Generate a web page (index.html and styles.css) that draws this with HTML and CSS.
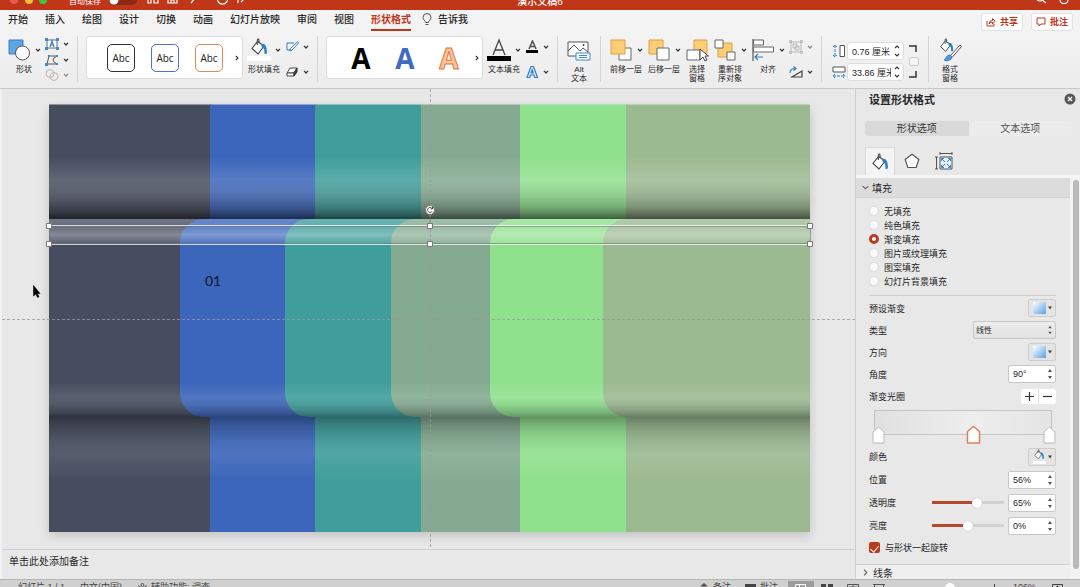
FILE: index.html
```html
<!DOCTYPE html>
<html lang="zh-CN">
<head>
<meta charset="utf-8">
<title>演示文稿6</title>
<link rel="stylesheet" href="styles.css">
</head>
<body>
<svg class="defs" aria-hidden="true">
  <symbol id="chev" viewBox="0 0 6 4"><path d="M1 .8 3 3 5 .8" fill="none" stroke="#333" stroke-width="1.2"/></symbol>
  <symbol id="next" viewBox="0 0 4 6"><path d="M.8 1 3 3 .8 5" fill="none" stroke="#333" stroke-width="1.1"/></symbol>
  <symbol id="steps" viewBox="0 0 6 14"><path d="M3 2 5 5H1zM3 12 5 9H1z" fill="#555"/></symbol>
  <symbol id="updown" viewBox="0 0 6 14"><path d="M1 4 3 2 5 4M1 10 3 12 5 10" fill="none" stroke="#333" stroke-width="1.1"/></symbol>
  <symbol id="bucket" viewBox="0 0 18 18"><path d="M7 4 2 10.5 8 16 14 8 7.5 3.500M7.300 7V2.200Q7.500.7 8.700 1L9.500 5.500" fill="#fff" stroke="#444" stroke-width="1.100"/><path d="M11 6Q17 4 17 15.500L14.500 16Q15 10 11.500 8.500z" fill="#2f7fc4"/></symbol>
</svg>
<div class="app">
  <header class="titlebar">
    <div class="title-left">
      <svg width="38" height="10" viewBox="0 0 38 10"><circle cx="4" cy="5" r="4" fill="#f0584f"/><circle cx="19" cy="5" r="4" fill="#f6bd3b"/><circle cx="33" cy="5" r="4" fill="#3ec544"/></svg>
      <span class="autosave">自动保存</span>
      <svg width="28" height="10" viewBox="0 0 28 10"><rect width="28" height="10" rx="5" fill="#8e2a13"/><circle cx="5" cy="5" r="4.500" fill="#fff"/></svg>
      <svg width="102" height="12" viewBox="0 0 102 12" fill="none" stroke="#fff" stroke-width="1.200"><path d="M1 3v6h3V5h3v4h4V3M21 1v8h9V1M24 9V6h3v3M44 9l5-6M71 3a5 5 0 1 0 9 0M91 9V2h8M94 8l6-6"/></svg>
    </div>
    <span class="doc-title">演示文稿6</span>
    <div class="title-right">
      <svg width="34" height="12" viewBox="0 0 34 12" fill="none" stroke="#fff" stroke-width="1.200"><circle cx="4" cy="3" r="4"/><path d="M6 6l4 3M24 3v3a4 3.500 0 0 0 8 0V3"/></svg>
    </div>
  </header>

  <nav class="tabs">
    <button>开始</button><button>插入</button><button>绘图</button><button>设计</button><button>切换</button><button>动画</button><button>幻灯片放映</button><button>审阅</button><button>视图</button><button class="current">形状格式</button>
    <button class="tell"><svg width="10" height="13" viewBox="0 0 10 13" fill="none" stroke="#555"><path d="M3.500 9.500C3.500 7.500 1 7 1 4.500a4 4 0 0 1 8 0C9 7 6.500 7.500 6.500 9.500zM3.500 11.500h3"/></svg>告诉我</button>
    <div class="share">
      <button><svg width="10" height="10" viewBox="0 0 10 10" fill="none" stroke="#c0391d"><path d="M1 4v5h7V7M3 7Q3 3.500 6.500 3.500V1.500L9.300 4.300 6.500 7V5Q4 5 3 7z"/></svg>共享</button>
      <button><svg width="10" height="10" viewBox="0 0 10 10" fill="none" stroke="#c0391d"><path d="M1 1h8v6H5L3 9V7H1z"/></svg>批注</button>
    </div>
  </nav>

  <section class="ribbon">
    <button class="tool"><span class="pic"><svg width="24" height="24" viewBox="0 0 24 24"><path d="M2 2h14v14H2z" fill="#5da5e4" stroke="#3b7fc0"/><circle cx="15.500" cy="15" r="7" fill="#fff" stroke="#555"/></svg><svg class="chev"><use href="#chev"/></svg></span><span>形状</span></button>
    <div class="minis three">
      <button aria-label="文本框"><svg width="14" height="12" viewBox="0 0 14 12"><path d="M2 2h10v8H2z" fill="#fff" stroke="#6b6b6b"/><path d="M5 9 7 3 9 9M5.700 7h2.600" stroke="#2f7fc4" fill="none" stroke-width="1.200"/><path d="M0 0h3v3H0zM11 0h3v3h-3zM0 9h3v3H0zM11 9h3v3h-3z" fill="#3b8bd0"/></svg><svg class="chev"><use href="#chev"/></svg></button>
      <button aria-label="编辑形状"><svg width="14" height="12" viewBox="0 0 14 12"><path d="M4 2h8Q8 4 8 6t4 4H2z" fill="none" stroke="#555"/><path d="M3 1h2v2H3zM11 1h2v2h-2zM0 9h3v3H0zM11 9h2v2h-2z" fill="#3b8bd0"/></svg><svg class="chev"><use href="#chev"/></svg></button>
      <button aria-label="合并形状" disabled><svg width="14" height="12" viewBox="0 0 14 12" fill="none" stroke="#888"><circle cx="5" cy="4.500" r="4"/><circle cx="9" cy="7.500" r="4"/></svg><svg class="chev"><use href="#chev"/></svg></button>
    </div>
    <span class="sep"></span>
    <div class="gallery">
      <button class="abc dark">Abc</button><button class="abc blue">Abc</button><button class="abc orange">Abc</button>
      <button class="more" aria-label="更多形状样式"><svg width="4" height="6"><use href="#next"/></svg></button>
    </div>
    <button class="tool"><span class="pic"><svg width="24" height="24" viewBox="0 0 24 24"><use href="#bucket" x="3" y="0" width="18" height="18"/><path d="M0 18h24v5H0z" fill="#fff"/></svg><svg class="chev"><use href="#chev"/></svg></span><span>形状填充</span></button>
    <div class="minis">
      <button aria-label="形状轮廓"><svg width="14" height="12" viewBox="0 0 14 12"><path d="M9 2H2v7h5" fill="none" stroke="#2f7fc4"/><path d="M12.500.8 13.500 2 7 9 5 10 5.500 7.500z" fill="#fff" stroke="#2f7fc4"/></svg><svg class="chev"><use href="#chev"/></svg></button>
      <button aria-label="形状效果"><svg width="14" height="12" viewBox="0 0 14 12"><path d="M5 2h7L9 7H2z" fill="#fff" stroke="#444"/><path d="M2 7h7v3H2z" fill="#fff" stroke="#444"/><path d="M9 7l3-5v4L9 10z" fill="#444" stroke="#333"/></svg><svg class="chev"><use href="#chev"/></svg></button>
    </div>
    <span class="sep"></span>
    <div class="gallery">
      <button class="wa black">A</button><button class="wa azure">A</button><button class="wa peach">A</button>
      <button class="more" aria-label="更多艺术字样式"><svg width="4" height="6"><use href="#next"/></svg></button>
    </div>
    <button class="tool"><span class="pic"><svg width="24" height="24" viewBox="0 0 24 24"><path d="M6 17 12 2 18 17M8 12h8" fill="none" stroke="#444" stroke-width="1.300"/><path d="M0 18h24v5H0z"/></svg><svg class="chev"><use href="#chev"/></svg></span><span>文本填充</span></button>
    <div class="minis">
      <button aria-label="文本轮廓"><svg width="14" height="14" viewBox="0 0 14 14"><path d="M4 9 7.500 1 11 9M5.500 6.500h4" fill="none" stroke="#555" stroke-width="1.600"/><path d="M1 10h12v3H1z"/></svg><svg class="chev"><use href="#chev"/></svg></button>
      <button aria-label="文本效果"><svg width="14" height="14" viewBox="0 0 14 14"><path d="M2 12.500 6 1.500h2.500l4 11H9.700L9 10H5.500l-.7 2.500zM6.200 8h2L7.200 5z" fill="#d8ecfb" stroke="#2f7fc4" stroke-width="1.200"/></svg><svg class="chev"><use href="#chev"/></svg></button>
    </div>
    <span class="sep"></span>
    <button class="tool alt"><span class="pic"><svg width="24" height="24" viewBox="0 0 24 24"><path d="M1 4h20v14H1z" fill="#fff" stroke="#555"/><path d="M1 13 7 7l6 6 3-3 5 4" fill="none" stroke="#555"/><circle cx="16.500" cy="7" r="1" fill="#444"/><path d="M9 15h14v7H9z" fill="#fff" stroke="#3b8bd0"/><path d="M12 17.500h8M12 19.500h8" stroke="#3b8bd0"/></svg></span><span>Alt<br>文本</span></button>
    <span class="sep"></span>
    <button class="tool"><span class="pic"><svg width="24" height="24" viewBox="0 0 24 24"><path d="M10 10h12v12H10z" fill="#fff" stroke="#666"/><path d="M2 2h14v14H2z" fill="#fbcd77" stroke="#e0a03c"/></svg><svg class="chev"><use href="#chev"/></svg></span><span>前移一层</span></button>
    <button class="tool"><span class="pic"><svg width="24" height="24" viewBox="0 0 24 24"><path d="M2 2h14v14H2z" fill="#fbcd77" stroke="#e0a03c"/><path d="M10 10h12v12H10z" fill="#fff" stroke="#666"/></svg><svg class="chev"><use href="#chev"/></svg></span><span>后移一层</span></button>
    <button class="tool slim"><span class="pic"><svg width="24" height="24" viewBox="0 0 24 24"><path d="M9 2h13v13H9z" fill="#fbcd77" stroke="#e0a03c"/><path d="M2 12h13v10H2z" fill="#fff" stroke="#666"/><path d="M15 11v11l3-3 2 4 2-1-2-4h3.500z" fill="#fff" stroke="#444"/></svg></span><span>选择<br>窗格</span></button>
    <button class="tool"><span class="pic"><svg width="24" height="24" viewBox="0 0 24 24"><path d="M5 5h14v14H5z" fill="#fbcd77" stroke="#e0a03c"/><path d="M2 2h8v8H2zM14 14h8v8h-8z" fill="#fff" stroke="#666"/></svg><svg class="chev"><use href="#chev"/></svg></span><span>重新排<br>序对象</span></button>
    <button class="tool"><span class="pic"><svg width="24" height="24" viewBox="0 0 24 24"><path d="M2 1v22" stroke="#555" stroke-width="1.200"/><path d="M2.500 2h10v5h-10zM2.500 9h20v5h-20z" fill="#fff" stroke="#666"/><path d="M12 19H4M7 16l-3 3 3 3" fill="none" stroke="#2f7fc4" stroke-width="1.200"/></svg><svg class="chev"><use href="#chev"/></svg></span><span>对齐</span></button>
    <div class="minis">
      <button aria-label="组合" disabled><svg width="14" height="14" viewBox="0 0 14 14" fill="none" stroke="#888"><path d="M2 2h10v10H2zM4 4h4v4H4zM6 6h4v4H6z"/><path d="M.5.500h2v2h-2zM11.500.500h2v2h-2zM.5 11.500h2v2h-2zM11.500 11.500h2v2h-2z"/></svg><svg class="chev"><use href="#chev"/></svg></button>
      <button aria-label="旋转"><svg width="14" height="12" viewBox="0 0 14 12" fill="none"><path d="M3 11h10V5z" stroke="#444" stroke-width="1.200"/><path d="M1 7Q1 2.500 6 2.500M4.500.5 7 2.500l-2.500 2" stroke="#2f7fc4" stroke-width="1.200"/></svg><svg class="chev"><use href="#chev"/></svg></button>
    </div>
    <span class="sep"></span>
    <div class="size">
      <div class="fields">
        <label><svg width="14" height="14" viewBox="0 0 14 14" fill="none"><path d="M8 1.500h4.500v11H8z" stroke="#555" fill="#fff"/><path d="M3 1v12M1 3l2-2 2 2M1 11l2 2 2-2" stroke="#2f7fc4" stroke-dasharray="3 1"/></svg><span class="box"><input aria-label="高度" value="0.76 厘米"><svg width="6" height="14"><use href="#updown"/></svg></span></label>
        <label><svg width="14" height="14" viewBox="0 0 14 14" fill="none"><path d="M1 2h12v5H1z" stroke="#555" fill="#fff"/><path d="M1 11h12M3 9l-2 2 2 2M11 9l2 2-2 2" stroke="#2f7fc4" stroke-dasharray="3 1"/></svg><span class="box"><input aria-label="宽度" value="33.86 厘米"><svg width="6" height="14"><use href="#updown"/></svg></span></label>
      </div>
      <div class="lock"><svg width="8" height="7" viewBox="0 0 8 7"><path d="M0 1h7v6" fill="none" stroke="#333" stroke-width="1.500"/></svg><input type="checkbox" aria-label="锁定纵横比"><svg width="8" height="7" viewBox="0 0 8 7"><path d="M0 6h7V0" fill="none" stroke="#333" stroke-width="1.500"/></svg></div>
    </div>
    <span class="sep"></span>
    <button class="tool alt"><span class="pic"><svg width="24" height="24" viewBox="0 0 24 24"><use href="#bucket" x="1" y="0" width="15" height="15"/><path d="M22 7 12 18l2 1.500L23.500 8.500z" fill="#fff" stroke="#555"/><path d="M12 17q3 1 1 4-3 3-7 1 2-1 2.500-3 1-2 3.500-2z" fill="#4d9be0" stroke="#2f7fc4"/></svg></span><span>格式<br>窗格</span></button>
  </section>

  <main class="work">
    <div class="stage">
      <svg class="canvas" viewBox="2 89 853 460" role="img" aria-label="幻灯片">
        <defs>
          <linearGradient id="fold" x2="0" y2="1"><stop offset="0" stop-color="#fff" stop-opacity="0"/><stop offset=".35" stop-color="#fff" stop-opacity=".14"/><stop offset=".6" stop-color="#999" stop-opacity=".24"/><stop offset=".8" stop-color="#383838" stop-opacity=".3"/><stop offset="1" stop-color="#000" stop-opacity=".58"/></linearGradient>
          <linearGradient id="edge" x2="0" y2="1"><stop offset="0" stop-color="#fff" stop-opacity=".22"/><stop offset=".3" stop-color="#fff" stop-opacity=".18"/><stop offset=".64" stop-color="#fff" stop-opacity=".34"/><stop offset="1" stop-color="#fff" stop-opacity=".08"/></linearGradient>
          <linearGradient id="dip" x2="0" y2="1"><stop offset="0" stop-color="#fff" stop-opacity=".02"/><stop offset=".4" stop-color="#fff" stop-opacity=".1"/><stop offset=".7" stop-color="#666" stop-opacity=".18"/><stop offset="1" stop-color="#000" stop-opacity=".33"/></linearGradient>
          <linearGradient id="rise" x2="0" y2="1"><stop offset="0" stop-color="#000" stop-opacity=".33"/><stop offset=".25" stop-color="#444" stop-opacity=".16"/><stop offset=".6" stop-color="#fff" stop-opacity=".09"/><stop offset="1" stop-color="#fff" stop-opacity="0"/></linearGradient>
          <filter id="soft" x="-10%" y="-10%" width="120%" height="120%"><feGaussianBlur stdDeviation="6"/></filter>
        </defs>
        <rect x="49" y="110" width="761" height="426" fill="#000" opacity=".16" filter="url(#soft)"/>
        <path fill="#474d5f" d="M49 104.500h162v427.500H49z"/>
        <path fill="#3c66bb" d="M210 104.500h106v427.500H210z"/>
        <path fill="#3f9e9b" d="M315 104.500h106v427.500H315z"/>
        <path fill="#84ab91" d="M421 104.500h99v427.500h-99z"/>
        <path fill="#90e18e" d="M520 104.500h107v427.500H520z"/>
        <path fill="#9cba92" d="M626 104.500h184v427.500H626z"/>
        <rect x="49" y="157" width="761" height="62" fill="url(#fold)"/>
        <rect x="49" y="417" width="761" height="63" fill="url(#rise)"/>
        <path fill="#474d5f" d="M49 219h200v198H49z"/>
        <path fill="#3c66bb" d="M340 219H204a24 24 0 0 0-24 24v150a24 24 0 0 0 24 24h136z"/>
        <path fill="#3f9e9b" d="M440 219H309a24 24 0 0 0-24 24v150a24 24 0 0 0 24 24h131z"/>
        <path fill="#84ab91" d="M540 219H415a24 24 0 0 0-24 24v150a24 24 0 0 0 24 24h125z"/>
        <path fill="#90e18e" d="M650 219H514a24 24 0 0 0-24 24v150a24 24 0 0 0 24 24h136z"/>
        <path fill="#9cba92" d="M810 219H627a24 24 0 0 0-24 24v150a24 24 0 0 0 24 24h183z"/>
        <rect x="49" y="219" width="761" height="25" fill="url(#edge)"/>
        <rect x="49" y="384" width="761" height="33" fill="url(#dip)"/>
        <text x="205" y="286" class="number">01</text>
        <path d="M2 319.500h853M430.500 89v460" stroke="#999" stroke-dasharray="3 2" opacity=".75"/>
        <path d="M49 225.500h761M49 244.500h761" stroke="#fff" opacity=".75"/>
        <path d="M49 226.500h761M49 243.500h761M49.500 226v18M810.500 226v18M430 214v12" stroke="#777" opacity=".6"/>
        <g fill="#fff" stroke="#777"><path d="M46.500 223.500h5v5h-5zM427.500 223.500h5v5h-5zM807.500 223.500h5v5h-5zM46.500 241.500h5v5h-5zM427.500 241.500h5v5h-5zM807.500 241.500h5v5h-5z"/><circle cx="430" cy="210" r="4.500"/></g>
        <path d="M432 208.500a2.500 2.500 0 1 0 .3 2.500M432.500 207v2h-2" fill="none" stroke="#555"/>
        <path d="M33.500 285.500v10.500l2.300-2 1.700 3.500 1.500-.8-1.700-3.200h2.700z" stroke="#000" stroke-width=".6"/>
      </svg>
      <div class="notes">单击此处添加备注</div>
    </div>

    <aside class="pane">
      <div class="pane-head"><h2>设置形状格式</h2><button aria-label="关闭"><svg width="12" height="12" viewBox="0 0 12 12"><circle cx="6" cy="6" r="5.500" fill="#585858"/><path d="M4 4l4 4M8 4l-4 4" stroke="#fff" stroke-width="1.400"/></svg></button></div>
      <div class="segments"><button class="on">形状选项</button><button>文本选项</button></div>
      <div class="kinds">
        <button class="on" aria-label="填充与线条"><svg width="18" height="18"><use href="#bucket"/></svg></button>
        <button aria-label="效果"><svg width="16" height="16" viewBox="0 0 16 16"><path d="M8 1.200 14.800 6.500 12.200 14.500H3.800L1.200 6.500z" fill="#fff" stroke="#555" stroke-width="1.200"/></svg></button>
        <button aria-label="大小与属性"><svg width="18" height="18" viewBox="0 0 18 18" fill="none" stroke="#555"><path d="M5 5h12v12H5z" fill="#e4f1fb"/><path d="M5 1.500h12M5 0v3M17 0v3M1.500 5v12M0 5h3M0 17h3"/><path d="M7 7l3 3M15 7l-3 3M7 15l3-3M15 15l-3-3M6.500 9V6.500H9M13 6.500h2.500V9M15.500 13v2.500H13M9 15.500H6.500V13" stroke="#2f86cf"/></svg></button>
      </div>
      <div class="scroller">
        <div class="content">
          <button class="section"><svg width="7" height="5" viewBox="0 0 6 4"><path d="M.5.8 3 3 5.500.8" fill="none" stroke="#666"/></svg>填充</button>
          <form class="form">
            <div class="radios">
              <label><input type="radio" name="fill">无填充</label>
              <label><input type="radio" name="fill">纯色填充</label>
              <label><input type="radio" name="fill" checked>渐变填充</label>
              <label><input type="radio" name="fill">图片或纹理填充</label>
              <label><input type="radio" name="fill">图案填充</label>
              <label><input type="radio" name="fill">幻灯片背景填充</label>
            </div>
            <div class="presets">
              <div class="row"><span>预设渐变</span><button type="button" class="swatch" aria-label="预设渐变"><i></i><svg width="4" height="4" viewBox="0 0 4 4"><path d="M0 .5h4L2 3.500z" fill="#444"/></svg></button></div>
              <div class="row"><label for="kind">类型</label><span class="pick"><select id="kind"><option>线性</option></select><svg width="6" height="12"><use href="#steps"/></svg></span></div>
              <div class="row"><span>方向</span><button type="button" class="swatch" aria-label="方向"><i></i><svg width="4" height="4" viewBox="0 0 4 4"><path d="M0 .5h4L2 3.500z" fill="#444"/></svg></button></div>
              <div class="row"><label for="angle">角度</label><span class="spin"><input id="angle" value="90°"><svg width="6" height="14"><use href="#steps"/></svg></span></div>
              <div class="row"><span>渐变光圈</span><span class="pm"><button type="button" aria-label="添加"><svg width="9" height="9" viewBox="0 0 9 9"><path d="M0 4.500h9M4.500 0v9" stroke="#333" stroke-width="1.200"/></svg></button><button type="button" aria-label="删除"><svg width="9" height="9" viewBox="0 0 9 9"><path d="M0 4.500h9" stroke="#333" stroke-width="1.200"/></svg></button></span></div>
            </div>
            <svg class="ramp" viewBox="0 0 187 35" aria-hidden="true"><defs><linearGradient id="g"><stop offset="0" stop-color="#e0e0e0"/><stop offset=".55" stop-color="#eee"/><stop offset="1" stop-color="#e4e4e4"/></linearGradient></defs><path d="M5.500.5h177v24H5.500z" fill="url(#g)" stroke="#c4c4c4"/><path d="M4 33V22l5.500-5 5.500 5v11zM175 33V22l5.500-5 5.500 5v11z" fill="#fff" stroke="#bbb"/><path d="M98.500 33V21.500l6-5 6 5V33z" fill="#fff" stroke="#db8156" stroke-width="1.500"/></svg>
            <div class="row"><span>颜色</span><button type="button" class="swatch" aria-label="颜色"><svg width="13" height="15" viewBox="0 0 13 15"><use href="#bucket" width="12" height="11"/><path d="M0 12h13v3H0z" fill="#fff"/></svg><svg width="4" height="4" viewBox="0 0 4 4"><path d="M0 .5h4L2 3.500z" fill="#444"/></svg></button></div>
            <div class="row"><label for="pos">位置</label><span class="spin"><input id="pos" value="56%"><svg width="6" height="14"><use href="#steps"/></svg></span></div>
            <div class="row"><label for="alpha">透明度</label><input class="range alpha" type="range" value="65" aria-label="透明度"><span class="spin"><input id="alpha" value="65%"><svg width="6" height="14"><use href="#steps"/></svg></span></div>
            <div class="row"><label for="bright">亮度</label><input class="range" type="range" min="-100" max="100" value="0" aria-label="亮度"><span class="spin"><input id="bright" value="0%"><svg width="6" height="14"><use href="#steps"/></svg></span></div>
            <label class="turn"><input type="checkbox" checked>与形状一起旋转</label>
          </form>
          <button class="section line"><svg width="5" height="7" viewBox="0 0 4 6"><path d="M.8.5 3 3 .8 5.500" fill="none" stroke="#666"/></svg>线条</button>
        </div>
        <div class="bar"><i></i></div>
      </div>
    </aside>
  </main>

  <footer class="status">
    <span>幻灯片 1 / 1</span><span>中文(中国)</span>
    <span class="with"><svg width="11" height="10" viewBox="0 0 11 10" fill="none" stroke="#555"><circle cx="5.500" cy="2" r="1.500"/><path d="M1 2.500l3 2v5M10 2.500l-3 2v5"/></svg>辅助功能: 调查</span>
    <div class="views">
      <button><svg width="12" height="9" viewBox="0 0 12 9"><path d="M6 0l4 3.500H2zM0 5h12v1H0z" fill="#555"/></svg>备注</button>
      <button><svg width="12" height="9" viewBox="0 0 12 9"><path d="M0 1h11v7H0z" fill="#444"/></svg>批注</button>
      <button class="view on" aria-label="普通视图"><svg width="12" height="9" viewBox="0 0 12 9" fill="none" stroke="#fff"><path d="M.5 1.500h10V9M.5 1.500V9M4.500 2v7M6 5h4"/></svg></button>
      <button class="view" aria-label="幻灯片浏览"><svg width="12" height="9" viewBox="0 0 12 9" fill="#444"><path d="M0 1h5v3H0zM7 1h5v3H7zM0 6h5v3H0zM7 6h5v3H7z"/></svg></button>
      <button class="view" aria-label="阅读视图"><svg width="12" height="9" viewBox="0 0 12 9" fill="none" stroke="#555"><path d="M.5 1.500h11V9M.5 1.500V9M6 2v7M2 4h3M7 4h3"/></svg></button>
      <button class="view" aria-label="幻灯片放映"><svg width="12" height="9" viewBox="0 0 12 9" fill="none" stroke="#555"><path d="M0 1.500h12M1.500 2v5h9V2"/></svg></button>
      <svg width="100" height="10" viewBox="0 0 100 10"><path d="M1 4.500h7M92 4.500h7M95.500 1v8" stroke="#444"/><path d="M12 4.500h76" stroke="#999"/><circle cx="51" cy="5" r="5" fill="#fff"/></svg>
      <span class="zoom">106%</span>
      <svg width="11" height="9" viewBox="0 0 11 9" fill="none" stroke="#444"><path d="M.5 1.500h10V9M.5 1.500V9M5.500 3v6M3.500 4.500l2-1.500 2 1.500"/></svg>
    </div>
  </footer>
</div>
</body>
</html>
```

FILE: styles.css
```css
* { box-sizing: border-box; }
body {
  margin: 0;
  overflow: hidden;
  color: #262626;
  font-family: "Liberation Sans", "Noto Sans CJK SC", sans-serif;
  font-size: 9px;
}
button, input, select { font: inherit; color: inherit; }
button { border: 0; padding: 0; background: none; white-space: nowrap; }
svg { display: block; flex: none; }
.defs { width: 0; height: 0; position: absolute; }
.chev { width: 6px; height: 4px; }
.app { display: flex; flex-direction: column; height: 100vh; }

/* Title bar */
.titlebar {
  height: 10px;
  flex: none;
  overflow: hidden;
  display: grid;
  grid-template: 10px / 1fr auto 1fr;
  align-items: end;
  background: #bf3619;
  color: #fff;
}
.title-left, .title-right, .doc-title { display: flex; align-items: center; height: 20px; }
.title-left { padding-left: 10px; }
.title-right { justify-content: flex-end; padding-right: 10px; }
.autosave { font-size: 8px; margin: 0 8px 0 21px; }
.title-left svg:last-child { margin-left: 10px; }
.doc-title { font-size: 10px; font-weight: 500; }

/* Tabs */
.tabs {
  display: flex;
  flex: none;
  height: 24px;
  padding: 0 7px 0 8px;
  gap: 17px;
  background: #f3f3f3;
  font-size: 10px;
  font-weight: 500;
}
.tabs button { border-bottom: 2px solid transparent; height: 21px; line-height: 19px; }
.tabs .current { color: #bf3619; border-color: #bf3619; font-weight: 700; }
.tabs .tell { display: flex; align-items: center; gap: 6px; margin-left: -6px; }
.share { display: flex; gap: 8px; margin-left: auto; padding-top: 3px; }
.tabs .share button {
  display: flex;
  align-items: center;
  justify-content: center;
  gap: 4px;
  width: 42px;
  height: 18px;
  border: 1px solid #e2e2e2;
  border-radius: 3px;
  background: #fff;
  color: #bf3619;
  font-size: 9px;
  font-weight: 700;
}

/* Ribbon */
.ribbon {
  display: flex;
  flex: none;
  height: 55px;
  padding: 2px 7px 0;
  gap: 4px;
  background: linear-gradient(#f3f3f3, #ececec);
  border-bottom: 1px solid #c9c9c9;
}
.sep { width: 1px; height: 46px; margin: 0 4px; background: #d4d4d4; flex: none; }
.tool {
  display: flex;
  flex-direction: column;
  align-items: center;
  gap: 3px;
  width: 34px;
  padding-top: 2px;
  flex: none;
  font-size: 8px;
  line-height: 9px;
}
.tool > span { display: block; }
.tool .pic { display: flex; align-items: center; gap: 4px; width: 34px; height: 24px; }
.tool.alt { width: 26px; }
.tool.slim { width: 24px; }
.tool.alt .pic, .tool.slim .pic { width: 24px; }
.minis {
  display: flex;
  flex-direction: column;
  justify-content: space-between;
  width: 24px;
  height: 46px;
  padding: 4px 0 3px;
  flex: none;
}
.minis.three { padding: 1px 0 0; }
.minis button { display: flex; align-items: center; justify-content: space-between; height: 14px; }
.minis button:disabled { opacity: .55; }
.gallery {
  display: flex;
  align-items: center;
  width: 157px;
  height: 43px;
  padding-left: 20px;
  gap: 16px;
  flex: none;
  background: #fff;
  border: 1px solid #dcdcdc;
  border-radius: 3px;
}
.gallery .more { margin-left: -4px; }
.abc {
  width: 28px;
  height: 28px;
  border: 1px solid #333;
  border-radius: 5px;
  color: #222;
  font: 10px "Open Sans", sans-serif;
}
.abc.blue { border-color: #4b74c4; }
.abc.orange { border-color: #dd8a52; }
.wa { width: 28px; font: 700 28px/40px "Open Sans", sans-serif; color: #000; }
.wa.azure { color: #3f6cbf; }
.wa.peach { color: #f9c59c; -webkit-text-stroke: 1px #e8743b; }
.size { display: flex; gap: 5px; width: 90px; padding: 6px 0 0 2px; flex: none; }
.fields { display: flex; flex-direction: column; gap: 3px; }
.fields label { display: flex; align-items: center; gap: 1px; }
.box {
  display: flex;
  align-items: center;
  width: 57px;
  height: 18px;
  padding: 0 3px 0 4px;
  background: #fff;
  border: 1px solid #ddd;
  border-radius: 3px;
}
.box input { width: 39px; margin-right: auto; padding: 0; border: 0; background: none; min-width: 0; }
.lock { display: flex; flex-direction: column; align-items: flex-start; gap: 5px; padding-top: 3px; }
.lock input {
  appearance: none;
  width: 10px;
  height: 9px;
  margin: 0;
  border: 1px solid #ccc;
  border-radius: 2px;
  background: #f6f6f6;
}

/* Work area */
.work { display: flex; flex: 1; min-height: 0; background: #e8e8e8; }
.stage { flex: 1; min-width: 0; display: flex; flex-direction: column; border-left: 2px solid #f1f1f1; }
.canvas { flex: 1; width: 100%; min-height: 0; }
.number { font: 14px Lato, sans-serif; fill: #0d1526; }
.notes {
  flex: none;
  height: 30px;
  padding: 0 7px;
  border-top: 1px solid #d0d0d0;
  font-size: 10px;
  line-height: 24px;
}

/* Format pane */
.pane {
  display: flex;
  flex-direction: column;
  width: 225px;
  flex: none;
  border-left: 1px solid #cfcfcf;
  background: #e8e8e8;
}
.pane-head { display: flex; align-items: center; justify-content: space-between; height: 20px; padding: 0 4px 0 13px; flex: none; }
.pane-head h2 { margin: 0; font-size: 11px; font-weight: 700; }
.segments { display: flex; height: 15px; margin: 12px 8px 0 9px; flex: none; border-radius: 3px; overflow: hidden; background: #ececec; }
.segments button { flex: 1; font-size: 10px; line-height: 15px; color: #555; }
.segments .on { background: #d9d9d9; color: #333; }
.kinds { display: flex; height: 29px; margin-top: 11px; padding-left: 9px; flex: none; border-bottom: 1px solid #f6f6f6; gap: 2px; }
.kinds button { display: grid; place-items: center; width: 30px; }
.kinds .on { background: #f4f4f4; border: 1px solid #dadada; border-bottom: 0; }
.scroller { display: flex; flex: 1; min-height: 0; padding-top: 2px; background: linear-gradient(#f6f6f6 2px, #e8e8e8 2px); }
.content { flex: 1; min-width: 0; overflow: hidden; }
.bar { width: 10px; padding: 2px 1px 10px 3px; background: #f3f3f3; }
.bar i { display: block; height: 100%; border-radius: 3px; background: #b9b9b9; }
.section {
  display: flex;
  align-items: center;
  gap: 3px;
  width: 100%;
  height: 20px;
  padding-left: 6px;
  background: #dcdcdc;
  border-bottom: 1px solid #d2d2d2;
  font-size: 10px;
}
.section.line { gap: 5px; height: 17px; padding-left: 7px; margin-top: 6px; background: #efefef; border-top: 1px solid #d0d0d0; }
.form { padding: 6px 14px 0 13px; }
.radios { display: flex; flex-direction: column; padding-bottom: 7px; border-bottom: 1px solid #d0d0d0; }
.radios label, .turn { display: flex; align-items: center; gap: 5px; height: 14px; }
.radios input {
  appearance: none;
  width: 10px;
  height: 10px;
  margin: 0;
  border: 1px solid #dcdcdc;
  border-radius: 50%;
  background: #fafafa;
}
.radios input:checked { border: 3px solid #b83c1f; background: #fff; }
.row { display: flex; align-items: center; height: 23px; gap: 4px; }
.presets { padding: 1px 0 3px; }
.presets .row { height: 22px; }
.row > :first-child { margin-right: auto; }
.swatch {
  display: flex;
  align-items: center;
  justify-content: space-between;
  width: 28px;
  height: 18px;
  padding: 0 3px 0 4px;
  border: 1px solid #cdcdcd;
  border-radius: 2px;
  background: #e4e4e4;
}
.swatch i { width: 13px; height: 12px; background: linear-gradient(135deg, #fff, #5c9fe6); }
.pick, .spin { display: flex; align-items: center; border: 1px solid #c8c8c8; border-radius: 2px; padding-right: 2px; }
.pick { width: 83px; height: 18px; background: linear-gradient(#eee, #e2e2e2); }
.pick select { appearance: none; flex: 1; border: 0; padding: 0 2px; background: none; font-size: 8px; }
.spin { width: 48px; height: 18px; background: #fff; }
.spin input { flex: 1; min-width: 0; border: 0; padding: 0 4px; background: none; }
.pm { display: flex; width: 35px; height: 15px; border-radius: 3px; background: #fff; }
.pm button { display: grid; place-items: center; flex: 1; }
.pm button + button { border-left: 1px solid #e2e2e2; }
.ramp { width: 100%; height: 35px; }
.range {
  --at: 50%;
  appearance: none;
  width: 72px;
  height: 10px;
  margin: 0;
  background: linear-gradient(90deg, #b4472c var(--at), #d2d2d2 var(--at)) center / 100% 3px no-repeat;
}
.range.alpha { --at: 65%; }
.range::-webkit-slider-thumb { appearance: none; width: 10px; height: 10px; border-radius: 50%; background: #fff; box-shadow: 0 0 1px #999; }
.turn { height: 21px; }
.turn input {
  appearance: none;
  width: 11px;
  height: 11px;
  margin: 0;
  border-radius: 2px;
  background: #b83c1f;
  display: grid;
  place-items: center;
}
.turn input::before { content: ""; width: 4px; height: 7px; border: solid #fff; border-width: 0 1px 1px 0; transform: rotate(40deg); }

/* Status bar */
.status {
  display: flex;
  align-items: flex-start;
  gap: 15px;
  height: 8px;
  flex: none;
  overflow: hidden;
  padding: 1px 17px 0 18px;
  border-top: 1px solid #b5b5b5;
  background: #d0d0d0;
  color: #444;
  line-height: 13px;
}
.with, .views, .views button { display: flex; align-items: center; gap: 3px; }
.views { margin-left: auto; gap: 14px; height: 13px; }
.views .view { justify-content: center; width: 26px; height: 13px; margin: 0 -7px; }
.views .on { background: #9c9c9c; margin-left: -4px; }
.zoom { margin-right: 2px; }
```
